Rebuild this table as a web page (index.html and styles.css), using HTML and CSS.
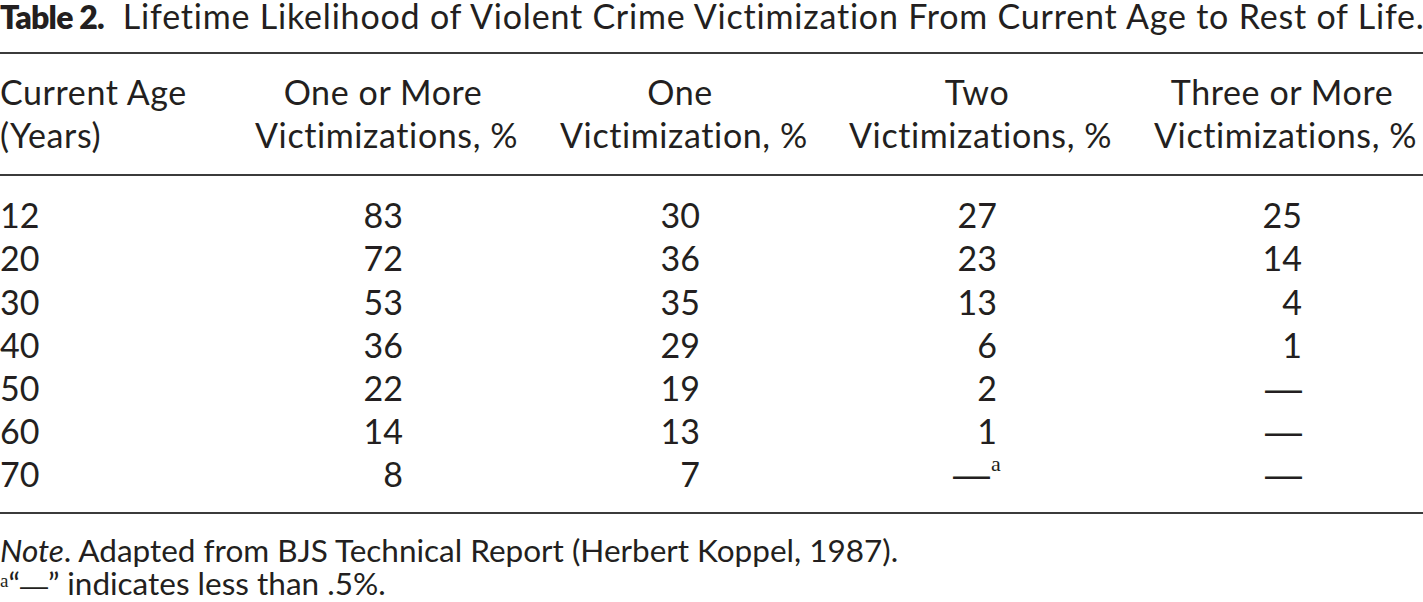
FILE: index.html
```html
<!DOCTYPE html>
<html>
<head>
<meta charset="utf-8">
<link rel="stylesheet" href="styles.css">
</head>
<body>
<div class="page">
  <div class="title"><span class="tlabel">Table 2.</span>Lifetime Likelihood of Violent Crime Victimization From Current Age to Rest of Life.</div>
  <div class="rule"></div>
  <div class="grid head">
    <div class="c1">Current Age<br>(Years)</div>
    <div class="cc">One or More<br>Victimizations, %</div>
    <div class="cc">One<br>Victimization, %</div>
    <div class="cc">Two<br>Victimizations, %</div>
    <div class="cc">Three or More<br>Victimizations, %</div>
  </div>
  <div class="rule"></div>
  <div class="tbody">
    <div class="grid row"><div class="c1">12</div><div class="cc"><span class="num">83</span></div><div class="cc"><span class="num">30</span></div><div class="cc"><span class="num">27</span></div><div class="cc"><span class="num">25</span></div></div>
    <div class="grid row"><div class="c1">20</div><div class="cc"><span class="num">72</span></div><div class="cc"><span class="num">36</span></div><div class="cc"><span class="num">23</span></div><div class="cc"><span class="num">14</span></div></div>
    <div class="grid row"><div class="c1">30</div><div class="cc"><span class="num">53</span></div><div class="cc"><span class="num">35</span></div><div class="cc"><span class="num">13</span></div><div class="cc"><span class="num">4</span></div></div>
    <div class="grid row"><div class="c1">40</div><div class="cc"><span class="num">36</span></div><div class="cc"><span class="num">29</span></div><div class="cc"><span class="num">6</span></div><div class="cc"><span class="num">1</span></div></div>
    <div class="grid row"><div class="c1">50</div><div class="cc"><span class="num">22</span></div><div class="cc"><span class="num">19</span></div><div class="cc"><span class="num">2</span></div><div class="cc"><span class="num"><span class="dash">—</span></span></div></div>
    <div class="grid row"><div class="c1">60</div><div class="cc"><span class="num">14</span></div><div class="cc"><span class="num">13</span></div><div class="cc"><span class="num">1</span></div><div class="cc"><span class="num"><span class="dash">—</span></span></div></div>
    <div class="grid row"><div class="c1">70</div><div class="cc"><span class="num">8</span></div><div class="cc"><span class="num">7</span></div><div class="cc"><span class="dash">—</span><sup class="fn">a</sup></div><div class="cc"><span class="num"><span class="dash">—</span></span></div></div>
  </div>
  <div class="rule"></div>
  <div class="notes">
    <p class="note"><i>Note</i>. Adapted from BJS Technical Report (Herbert Koppel, 1987).</p>
    <p class="note"><sup class="fnm">a</sup>“<span class="ndash">—</span>” indicates less than .5%.</p>
  </div>
</div>
</body>
</html>
```

FILE: styles.css
```css
html, body {
  margin: 0;
  padding: 0;
  background: #ffffff;
}
body {
  font-family: "Lato", "Open Sans", sans-serif;
  color: #231f20;
  font-size: 34px;
}
.page {
  width: 1423px;
}
.title {
  line-height: 32px;
  white-space: nowrap;
  letter-spacing: 0.8px;
}
.tlabel {
  font-size: 32px;
  font-weight: 800;
  letter-spacing: -0.8px;
  margin-right: 19px;
}
.rule {
  height: 2px;
  background: #3b3b3b;
}
.title + .rule {
  margin-top: 19px;
}
.grid {
  display: grid;
  grid-template-columns: 206px 256px 240px 256px 256px;
  column-gap: 49px;
}
.head {
  line-height: 43px;
  letter-spacing: 0.6px;
  padding-top: 16.3px;
  padding-bottom: 17.7px;
}
.c1 {
  text-align: left;
  white-space: nowrap;
}
.cc {
  text-align: center;
  white-space: nowrap;
}
.tbody {
  padding-top: 17.2px;
  padding-bottom: 16.9px;
}
.row {
  height: 43.2px;
  line-height: 43.2px;
  font-variant-numeric: tabular-nums;
}
.num {
  display: inline-block;
  width: 40px;
  text-align: right;
}
.dash {
  font-family: "Liberation Sans", sans-serif;
  font-size: 37px;
  line-height: 0;
}
.fn {
  font-family: "Liberation Serif", serif;
  font-size: 22px;
  line-height: 0;
  vertical-align: 16px;
  margin-left: 1px;
}
.notes {
  padding-top: 19.3px;
}
.note {
  margin: 0;
  font-size: 31.5px;
  line-height: 33px;
  white-space: nowrap;
}
.fnm {
  font-family: "Liberation Serif", serif;
  font-size: 19px;
  line-height: 0;
  vertical-align: 8px;
}
.ndash {
  font-family: "Liberation Sans", sans-serif;
  font-size: 28px;
  line-height: 0;
}
```
